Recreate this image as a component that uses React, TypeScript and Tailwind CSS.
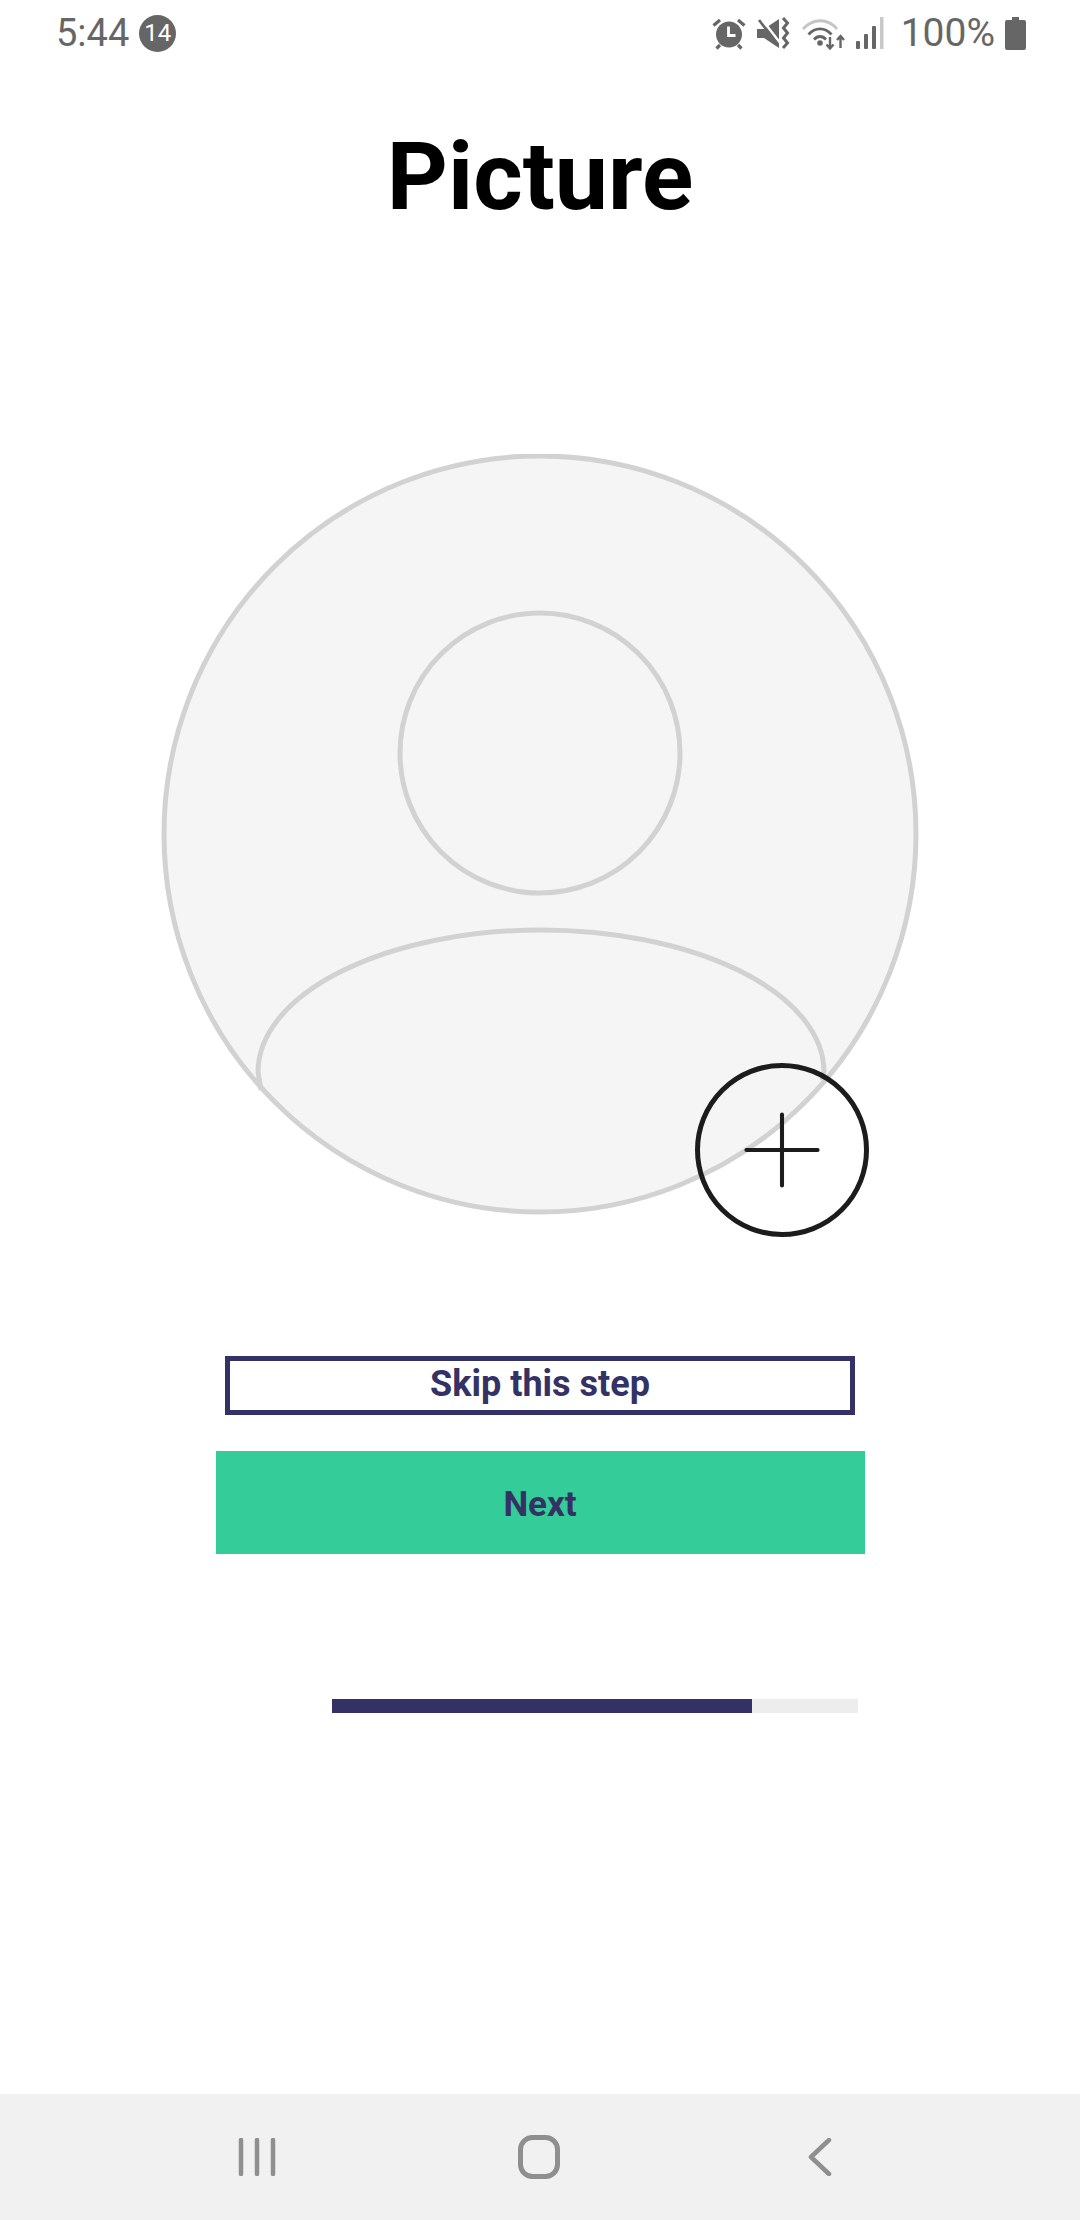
import { Plus } from "lucide-react";

function AlarmIcon() {
  return (
    <svg width="34" height="33" viewBox="0 0 34 33" fill="none">
      <circle cx="17" cy="17.5" r="13" fill="#666" />
      <path d="M16.500 9.500v9h7" stroke="#fff" strokeWidth="2.800" />
      <path d="M1.500 8.500 8 3M32.500 8.500 26 3M8 28l-3.500 3.500M26 28l3.500 3.500" stroke="#666" strokeWidth="3.200" />
    </svg>
  );
}

function MuteIcon() {
  return (
    <svg width="33" height="33" viewBox="0 0 33 33" fill="none">
      <path d="M0 12h7l15-10v29L7 21H0z" fill="#666" />
      <path d="M3 0l21 27" stroke="#fff" strokeWidth="2.400" />
      <path d="M2 3l19 25" stroke="#666" strokeWidth="2.600" />
      <path d="M26 1l4.500 5-4 5 4 5-4 5 4 5-4.500 5" stroke="#666" strokeWidth="3" />
    </svg>
  );
}

function WifiIcon() {
  return (
    <svg width="44" height="33" viewBox="0 0 44 33" fill="none">
      <path d="M1 12C11 1 26 1 35 12" stroke="#c4c4c4" strokeWidth="2.800" />
      <path d="M6.500 17.500C13 10 23 10 29.500 17.500" stroke="#666" strokeWidth="2.800" />
      <path d="M12 22.500C15.500 18.500 20.500 18.500 24 22.500" stroke="#666" strokeWidth="2.800" />
      <circle cx="18" cy="26" r="2.800" fill="#666" />
      <path d="M28 20v11M24.500 27.500l3.500 4 3.500-4" stroke="#666" strokeWidth="2.400" />
      <path d="M38.500 31V19.500M35 23l3.500-4 3.500 4" stroke="#666" strokeWidth="2.400" />
    </svg>
  );
}

function SignalIcon() {
  return (
    <svg width="28" height="32" viewBox="0 0 28 32" fill="none">
      <rect x="0" y="24" width="4" height="8" rx="1" fill="#666" />
      <rect x="8" y="17" width="4" height="15" rx="1" fill="#666" />
      <rect x="16" y="9" width="4" height="23" rx="1" fill="#666" />
      <rect x="24" y="0" width="3.500" height="32" fill="#c8c8c8" />
    </svg>
  );
}

function BatteryIcon() {
  return (
    <svg width="21" height="33" viewBox="0 0 21 33" fill="none">
      <path d="M7 0h7v3h5a2 2 0 0 1 2 2v26a2 2 0 0 1-2 2H2a2 2 0 0 1-2-2V5a2 2 0 0 1 2-2h5z" fill="#666" />
    </svg>
  );
}

function StatusBar() {
  return (
    <div className="flex h-[66px] shrink-0 items-center justify-between pl-[56px] pr-[54px]">
      <div className="flex items-center gap-[10px]">
        <span className="text-[38px] leading-none text-[#666]">5:44</span>
        <span className="flex h-[37px] w-[37px] items-center justify-center rounded-full bg-[#666] text-[24px] leading-none text-white">
          14
        </span>
      </div>
      <div className="flex items-center">
        <AlarmIcon />
        <span className="ml-[11px]"><MuteIcon /></span>
        <span className="ml-[12px]"><WifiIcon /></span>
        <span className="ml-[10px]"><SignalIcon /></span>
        <span className="ml-[17px] text-[39px] leading-none text-[#666]">100%</span>
        <span className="ml-[10px]"><BatteryIcon /></span>
      </div>
    </div>
  );
}

function Avatar() {
  return (
    <div className="relative h-[770px] w-[770px]">
      <svg width="770" height="770" viewBox="0 0 770 770" fill="none">
        <ellipse cx="385" cy="380" rx="376" ry="378" fill="#f5f5f5" stroke="#d2d2d2" strokeWidth="5" />
        <circle cx="385" cy="299" r="140" stroke="#d2d2d2" strokeWidth="5" />
        <path
          d="M106 636L103 618A283 142 0 0 1 669 618L667 626"
          stroke="#d2d2d2"
          strokeWidth="5"
        />
      </svg>
      <button
        type="button"
        aria-label="Add picture"
        className="absolute left-[540px] top-[609px] flex h-[174px] w-[174px] items-center justify-center rounded-full border-[5px] border-[#1c1c1c] text-[#1c1c1c]"
      >
        <Plus size={122} strokeWidth={0.8} />
      </button>
    </div>
  );
}

export default function App() {
  return (
    <div className="flex h-[2220px] w-[1080px] flex-col items-center bg-white [font-family:Roboto,sans-serif]">
      <div className="w-full"><StatusBar /></div>

      <h1 className="mt-[56px] text-[95px] font-bold leading-[110px] text-black">Picture</h1>

      <div className="mt-[222px]"><Avatar /></div>

      <button
        type="button"
        className="mt-[132px] flex h-[59px] w-[630px] items-center justify-center border-[5px] border-[#343264] pb-[3px] text-[36px] font-bold leading-none text-[#343264]"
      >
        Skip this step
      </button>

      <button
        type="button"
        className="mt-[36px] flex h-[103px] w-[649px] items-center justify-center bg-[#34cc98] pt-[3px] text-[35px] font-bold leading-none text-[#343264]"
      >
        Next
      </button>

      <div className="mt-[145px] ml-[109px] h-[14px] w-[526px] bg-[#ededed]">
        <div className="h-full w-[420px] bg-[#343264]" />
      </div>

      <div className="mt-auto flex h-[126px] w-full items-center bg-[#f1f1f1]">
        <div className="flex w-full items-center justify-between pl-[238px] pr-[248px]">
          <svg width="38" height="38" viewBox="0 0 38 38" fill="none" stroke="#8f8f8f" strokeWidth="4.500" strokeLinecap="round">
            <path d="M3 2v34M19 2v34M35 2v34" />
          </svg>
          <svg width="42" height="44" viewBox="0 0 42 44" fill="none" stroke="#8f8f8f" strokeWidth="5" className="-ml-[6px]">
            <rect x="2.500" y="2.500" width="37" height="39" rx="12" />
          </svg>
          <svg width="24" height="38" viewBox="0 0 24 38" fill="none" stroke="#8f8f8f" strokeWidth="4.500" strokeLinecap="round" strokeLinejoin="round">
            <path d="M21 2 3 19l18 17" />
          </svg>
        </div>
      </div>
    </div>
  );
}
